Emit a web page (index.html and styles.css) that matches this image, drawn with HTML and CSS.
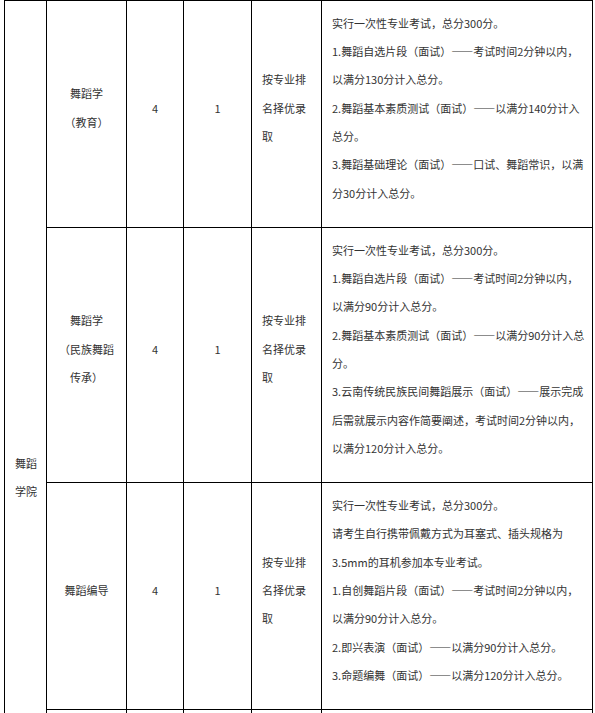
FILE: index.html
```html
<!DOCTYPE html>
<html lang="zh-CN">
<head>
<meta charset="utf-8">
<title>舞蹈学院专业考试</title>
<link rel="stylesheet" href="styles.css">
</head>
<body>
<table class="score">
  <colgroup>
    <col class="c-college">
    <col class="c-major">
    <col class="c-years">
    <col class="c-plan">
    <col class="c-rule">
    <col class="c-desc">
  </colgroup>
  <tbody>
    <tr>
      <td class="college" rowspan="4">舞蹈学院</td>
      <td class="major"><div>舞蹈学</div><div>（教育）</div></td>
      <td class="num">4</td>
      <td class="num">1</td>
      <td class="rule">按专业排名择优录取</td>
      <td class="desc">
        <p>实行一次性专业考试，总分300分。</p>
        <p>1.舞蹈自选片段（面试）——考试时间2分钟以内，以满分130分计入总分。</p>
        <p>2.舞蹈基本素质测试（面试）——以满分140分计入总分。</p>
        <p>3.舞蹈基础理论（面试）——口试、舞蹈常识，以满分30分计入总分。</p>
      </td>
    </tr>
    <tr>
      <td class="major"><div>舞蹈学</div><div>（民族舞蹈传承）</div></td>
      <td class="num">4</td>
      <td class="num">1</td>
      <td class="rule">按专业排名择优录取</td>
      <td class="desc">
        <p>实行一次性专业考试，总分300分。</p>
        <p>1.舞蹈自选片段（面试）——考试时间2分钟以内，以满分90分计入总分。</p>
        <p>2.舞蹈基本素质测试（面试）——以满分90分计入总分。</p>
        <p>3.云南传统民族民间舞蹈展示（面试）——展示完成后需就展示内容作简要阐述，考试时间2分钟以内，以满分120分计入总分。</p>
      </td>
    </tr>
    <tr>
      <td class="major"><div>舞蹈编导</div></td>
      <td class="num">4</td>
      <td class="num">1</td>
      <td class="rule">按专业排名择优录取</td>
      <td class="desc">
        <p>实行一次性专业考试，总分300分。</p>
        <p>请考生自行携带佩戴方式为耳塞式、插头规格为3.5mm的耳机参加本专业考试。</p>
        <p>1.自创舞蹈片段（面试）——考试时间2分钟以内，以满分90分计入总分。</p>
        <p>2.即兴表演（面试）——以满分90分计入总分。</p>
        <p>3.命题编舞（面试）——以满分120分计入总分。</p>
      </td>
    </tr>
    <tr class="next">
      <td class="major"></td>
      <td class="num"></td>
      <td class="num"></td>
      <td class="rule"></td>
      <td class="desc"></td>
    </tr>
  </tbody>
</table>
</body>
</html>
```

FILE: styles.css
```css
html, body {
  margin: 0;
  padding: 0;
  background: #ffffff;
}

body {
  font-family: "Noto Sans CJK SC", "Noto Sans", sans-serif;
  font-size: 11px;
  line-height: 28.33px;
  color: #333333;
}

.score {
  margin: 0 0 0 4px;
  border-collapse: collapse;
  table-layout: fixed;
  width: 588px;
}

.c-college { width: 42px; }
.c-major { width: 80px; }
.c-years { width: 57px; }
.c-plan { width: 68px; }
.c-rule { width: 70px; }
.c-desc { width: 271px; }

.score td {
  border: 1px solid #000000;
  padding: 7.67px 8px 20px;
  vertical-align: middle;
}

.score td.college {
  padding: 7.67px 8px 20px 10px;
  text-align: left;
}

.score td.major {
  text-align: center;
}

.score td.num {
  text-align: center;
}

.score td.rule {
  padding: 7.67px 10px 20px;
  text-align: left;
}

.score td.desc {
  padding: 7.67px 4px 20px 10px;
  text-align: left;
}

.desc p {
  margin: 0;
}

.next {
  height: 256px;
}
```
